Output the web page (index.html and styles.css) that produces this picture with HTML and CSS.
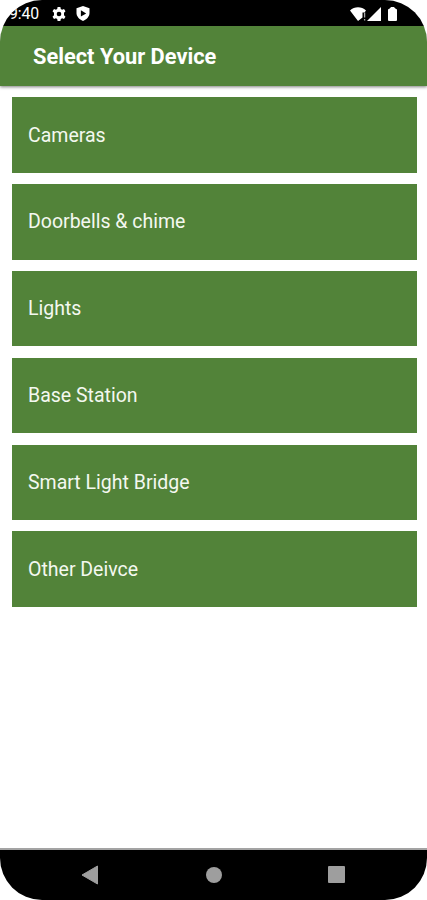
FILE: index.html
```
<!DOCTYPE html>
<html lang="en">
<head>
  <meta charset="UTF-8">
  <meta name="viewport" content="width=device-width, initial-scale=1.0">
  <title>Select Your Device</title>
  <link rel="stylesheet" href="styles.css">
</head>
<body>
  <div class="screen">
    <!-- Status bar -->
    <div class="status-bar">
      <span class="time">9:40</span>
      <svg class="gear" width="14" height="14" viewBox="0 0 14 14">
        <path d="M5.600 0h2.800l.4 2 1.300.7 1.900-.7L13.500 4.300 12 5.800v2.400l1.500 1.500-1.500 2.300-1.900-.7-1.300.7-.4 2H5.600l-.4-2-1.300-.7-1.900.7L.5 9.700 2 8.200V5.800L.5 4.300 2 2l1.900.7L5.200 2z" fill="#fff"/>
        <circle cx="7" cy="7" r="2.300" fill="#000"/>
      </svg>
      <svg class="shield" width="14" height="15" viewBox="0 0 14 15">
        <path d="M7 0L13.500 2.300v4.700c0 3.500-2.700 6.300-6.500 8C3.200 13.300.5 10.500.5 7V2.300z" fill="#fff"/>
        <path d="M4.900 4.200v6.400L10.200 7.400z" fill="#000"/>
      </svg>
      <div class="status-right">
        <svg width="17" height="14" viewBox="0 0 17 14">
          <path d="M0 3.500C4.500-.9 11.500-.9 16 3.500L14.500 5.500H12.500v5L8 14z" fill="#fff"/>
          <path d="M14.600 5.500v5M14.600 12v1.500" stroke="#aaa" stroke-width="1.300"/>
        </svg>
        <svg width="14" height="14" viewBox="0 0 14 14"><path d="M14 0v14H0z" fill="#fff"/></svg>
        <svg class="battery" width="9" height="14" viewBox="0 0 9 14"><path d="M3 0h3l1 1.200L9 2.500V13q0 1-1 1H1q-1 0-1-1V2.500L2 1.200z" fill="#fff"/></svg>
      </div>
    </div>

    <header class="app-bar">
      <h1>Select Your Device</h1>
    </header>

    <main class="device-list">
      <div class="device">Cameras</div>
      <div class="device">Doorbells &amp; chime</div>
      <div class="device">Lights</div>
      <div class="device">Base Station</div>
      <div class="device">Smart Light Bridge</div>
      <div class="device">Other Deivce</div>
    </main>

    <!-- System navigation -->
    <nav class="nav-bar">
      <svg width="18" height="20" viewBox="0 0 18 20"><path d="M16.500 1v18L1 10z" fill="#9e9e9e" stroke="#9e9e9e" stroke-linejoin="round"/></svg>
      <span class="home"></span>
      <span class="recent"></span>
    </nav>
  </div>
</body>
</html>
```

FILE: styles.css
```
* { box-sizing: border-box; }
body {
  margin: 0;
  background: #fff;
  font-family: Roboto, "Liberation Sans", sans-serif;
}
.screen {
  display: flex;
  flex-direction: column;
  height: 900px;
  border-radius: 42px;
  overflow: hidden;
  background: #fff;
}

.status-bar {
  display: flex;
  align-items: center;
  height: 26px;
  padding: 1px 30px 0 9px;
  background: #000;
  color: #fff;
}
.time { width: 43px; font-size: 15.8px; letter-spacing: -0.1px; }
.shield { margin-left: 10px; }
.status-right { display: flex; align-items: center; margin-left: auto; }
.battery { margin-left: 7px; }

.app-bar {
  position: relative;
  display: flex;
  align-items: center;
  flex: none;
  height: 60px;
  padding-left: 33px;
  background: #528339;
  box-shadow: 0 1px 3px rgba(0, 0, 0, 0.5);
}
.app-bar h1 {
  margin: 0;
  font-size: 21.8px;
  font-weight: 700;
  color: #fff;
}

.device-list {
  display: flex;
  flex-direction: column;
  flex: 1;
  gap: 11.3px;
  padding: 11.4px 10px 0 12px;
}
.device {
  display: flex;
  align-items: center;
  height: 75.5px;
  padding-left: 16px;
  background: #528339;
  color: #f4f8f0;
  font-size: 19.5px;
}

.nav-bar {
  display: flex;
  align-items: center;
  height: 52px;
  padding: 0 82px 1px 81px;
  border-top: 2px solid #a3a3a3;
  background: #000;
  justify-content: space-between;
}
.home { width: 16px; height: 16px; border-radius: 50%; background: #9e9e9e; }
.recent { width: 17px; height: 17px; border-radius: 1px; background: #9e9e9e; }
```
